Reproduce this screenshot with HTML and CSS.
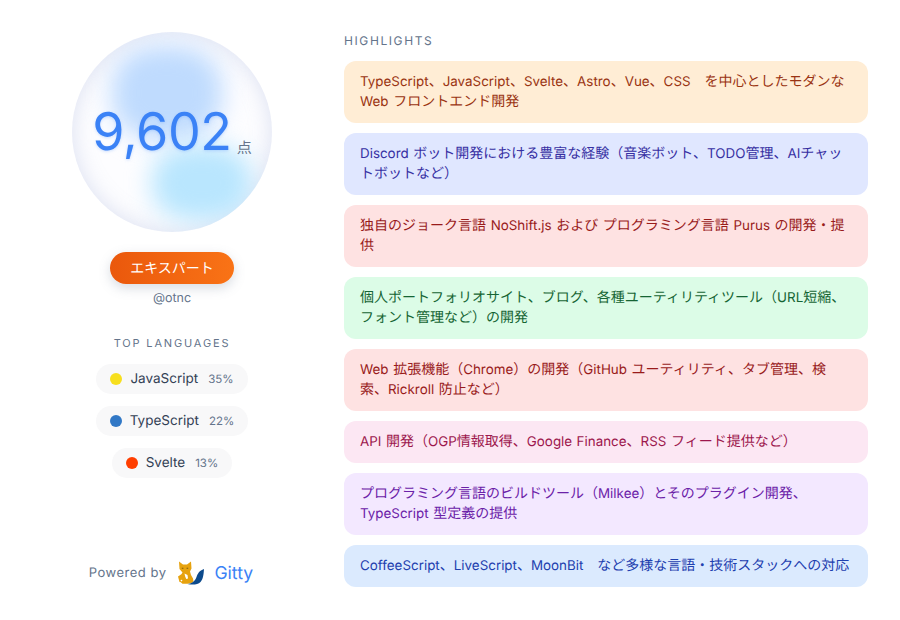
FILE: index.html
```html
<!DOCTYPE html>
<html lang="ja">
<head>
<meta charset="utf-8">
<title>Gitty</title>
<link rel="stylesheet" href="styles.css">
</head>
<body>
<main class="page">
  <aside class="profile">
    <div class="orb">
      <div class="blob blob-a"></div>
      <div class="blob blob-b"></div>
      <div class="score"><span class="score-num">9,602</span><span class="score-unit">点</span></div>
    </div>
    <div class="rank">エキスパート</div>
    <div class="handle">@otnc</div>
    <div class="lang-title">TOP LANGUAGES</div>
    <ul class="langs">
      <li class="lang"><span class="dot dot-js"></span><span class="lang-name">JavaScript</span><span class="lang-pct">35%</span></li>
      <li class="lang"><span class="dot dot-ts"></span><span class="lang-name">TypeScript</span><span class="lang-pct">22%</span></li>
      <li class="lang"><span class="dot dot-sv"></span><span class="lang-name">Svelte</span><span class="lang-pct">13%</span></li>
    </ul>
    <div class="powered">
      <span class="powered-by">Powered by</span>
      <svg class="logo" width="27" height="24" viewBox="0 0 27 24" aria-hidden="true">
        <path fill="#e6a20e" d="M1 .5L5 3.500h4L13 .5l.5 7-1.500 3 1 3.500 2 3.500.5 3-2 1.500-4 .7H4.500L3 21.500l1.500-2.500-2.500-.5-.5-3 2-2.500 1-1.500L1.500 8z"/>
        <path fill="#e6a20e" d="M0 15.500l3-2 1.500 3-2 3 2 2-3-.5z"/>
        <path fill="#fff" d="M6.500 12.500l3 1.500.5 3.500-1.800.5-1-2.500z"/>
        <path fill="#7a5a10" d="M3.800 6.800h1.600v1H3.800zM8.600 6.800h1.600v1H8.600z"/>
        <path fill="#0d4a8c" d="M9.500 23c5-.5 7.500-3 9-7 1.200-3.200 2.800-6.500 7.500-8-.3 5-.8 10-3.500 13-2.500 2.600-8 3.200-13 2z"/>
      </svg>
      <span class="gitty">Gitty</span>
    </div>
  </aside>
  <section class="highlights">
    <h2 class="hl-title">HIGHLIGHTS</h2>
    <ul class="hl-list">
      <li class="hl hl-orange"><span class="en">TypeScript</span>、<span class="en">JavaScript</span>、<span class="en">Svelte</span>、<span class="en">Astro</span>、<span class="en">Vue</span>、<span class="en">CSS</span>&nbsp;&nbsp; を中心としたモダンな <span class="en">Web</span> フロントエンド開発</li>
      <li class="hl hl-indigo"><span class="en">Discord</span> ボット開発における豊富な経験（音楽ボット、<span class="en">TODO</span>管理、<span class="en">AI</span>チャッ<wbr>トボットなど）</li>
      <li class="hl hl-red">独自のジョーク言語 <span class="en">NoShift.js</span> および プログラミング言語 <span class="en">Purus</span> の開発・提<wbr>供</li>
      <li class="hl hl-green">個人ポートフォリオサイト、ブログ、各種ユーティリティツール（<span class="en">URL</span>短縮、<wbr>フォント管理など）の開発</li>
      <li class="hl hl-red"><span class="en">Web</span> 拡張機能（<span class="en">Chrome</span>）の開発（<span class="en">GitHub</span> ユーティリティ、タブ管理、検<wbr>索、<span class="en">Rickroll</span> 防止など）</li>
      <li class="hl hl-pink"><span class="en">API</span> 開発（<span class="en">OGP</span>情報取得、<span class="en">Google Finance</span>、<span class="en">RSS</span> フィード提供など）</li>
      <li class="hl hl-purple">プログラミング言語のビルドツール（<span class="en">Milkee</span>）とそのプラグイン開発、<span class="en">TypeScript</span> 型定義の提供</li>
      <li class="hl hl-blue"><span class="en">CoffeeScript</span>、<span class="en">LiveScript</span>、<span class="en">MoonBit</span>&nbsp;&nbsp; など多様な言語・技術スタックへの対応</li>
    </ul>
  </section>
</main>
</body>
</html>
```
FILE: styles.css
```css
* { box-sizing: border-box; }
html, body { margin: 0; padding: 0; }
body {
  width: 900px;
  height: 620px;
  background: #fff;
  font-family: Inter, "Noto Sans CJK JP", "Noto Sans", sans-serif;
  text-rendering: geometricPrecision;
  overflow: hidden;
}
ul { list-style: none; margin: 0; padding: 0; }
.page {
  display: flex;
  gap: 32px;
  padding: 32px;
  height: 620px;
}
.profile {
  width: 280px;
  flex: none;
  display: flex;
  flex-direction: column;
  align-items: center;
}
.orb {
  position: relative;
  width: 200px;
  height: 200px;
  border-radius: 50%;
  overflow: hidden;
  background: #fdfdff;
  box-shadow: inset 0 0 22px rgba(140, 155, 205, .3);
  display: flex;
  align-items: center;
  justify-content: center;
}
.blob {
  position: absolute;
  filter: blur(12px);
}
.blob-a {
  left: 40px;
  top: 14px;
  width: 110px;
  height: 94px;
  border-radius: 42%;
  background: #bfdbfe;
}
.blob-b {
  left: 80px;
  top: 113px;
  width: 100px;
  height: 76px;
  border-radius: 42%;
  background: #b9e6fe;
}
.score {
  position: relative;
  display: flex;
  align-items: flex-end;
}
.score-num {
  font-size: 52px;
  line-height: 64px;
  color: #3b82f6;
  letter-spacing: -.4px;
  text-shadow: 0 1px 3px rgba(59, 130, 246, .25);
}
.score-unit {
  font-size: 15px;
  line-height: 20px;
  color: #64748b;
  margin: 0 0 6px 5px;
}
.rank {
  margin-top: 20px;
  width: 124px;
  height: 32px;
  border-radius: 16px;
  background: linear-gradient(90deg, #ea580c, #f97316);
  box-shadow: 0 4px 12px rgba(100, 116, 139, .25);
  color: #fff;
  font-size: 14px;
  line-height: 34px;
  text-align: center;
}
.handle {
  margin-top: 6px;
  font-size: 12.5px;
  line-height: 18px;
  color: #64748b;
}
.lang-title {
  margin-top: 27px;
  font-size: 11px;
  line-height: 16px;
  letter-spacing: 1.85px;
  color: #64748b;
}
.langs {
  margin-top: 13px;
  display: flex;
  flex-direction: column;
  align-items: center;
  gap: 12px;
}
.lang {
  height: 30px;
  padding: 0 14px;
  border-radius: 15px;
  background: #f8f8f9;
  display: flex;
  align-items: center;
}
.dot {
  width: 12px;
  height: 12px;
  border-radius: 50%;
  margin-right: 8px;
}
.dot-js { background: #f7df1e; }
.dot-ts { background: #3178c6; }
.dot-sv { background: #ff3e00; }
.lang-name {
  font-size: 13.5px;
  color: #334155;
  margin-right: 10px;
}
.lang-pct {
  font-size: 11.5px;
  color: #64748b;
}
.powered {
  margin-top: auto;
  margin-bottom: 1px;
  padding-right: 2px;
  display: flex;
  align-items: center;
  height: 28px;
}
.powered-by {
  font-size: 13px;
  color: #64748b;
  letter-spacing: .5px;
}
.logo { margin: 0 9px 0 12px; }
.gitty {
  font-size: 17.6px;
  color: #3b82f6;
}
.highlights {
  flex: 1;
  min-width: 0;
}
.hl-title {
  margin: 0;
  font-weight: 400;
  font-size: 12px;
  line-height: 18px;
  letter-spacing: 1.6px;
  color: #64748b;
}
.hl-list {
  margin-top: 11px;
  display: flex;
  flex-direction: column;
  gap: 10px;
}
.hl {
  padding: 11px 16px;
  border-radius: 12px;
  font-size: 14px;
  line-height: 20px;
  word-spacing: .7px;
}
.en { font-size: 13.4px; }
.hl-orange { background: #ffedd5; color: #9a3412; }
.hl-indigo { background: #e0e7ff; color: #3730a3; }
.hl-red { background: #fee2e2; color: #991b1b; }
.hl-green { background: #dcfce7; color: #166534; }
.hl-pink { background: #fce7f3; color: #9d174d; }
.hl-purple { background: #f3e8ff; color: #6b21a8; }
.hl-blue { background: #dbeafe; color: #1e40af; }
```
